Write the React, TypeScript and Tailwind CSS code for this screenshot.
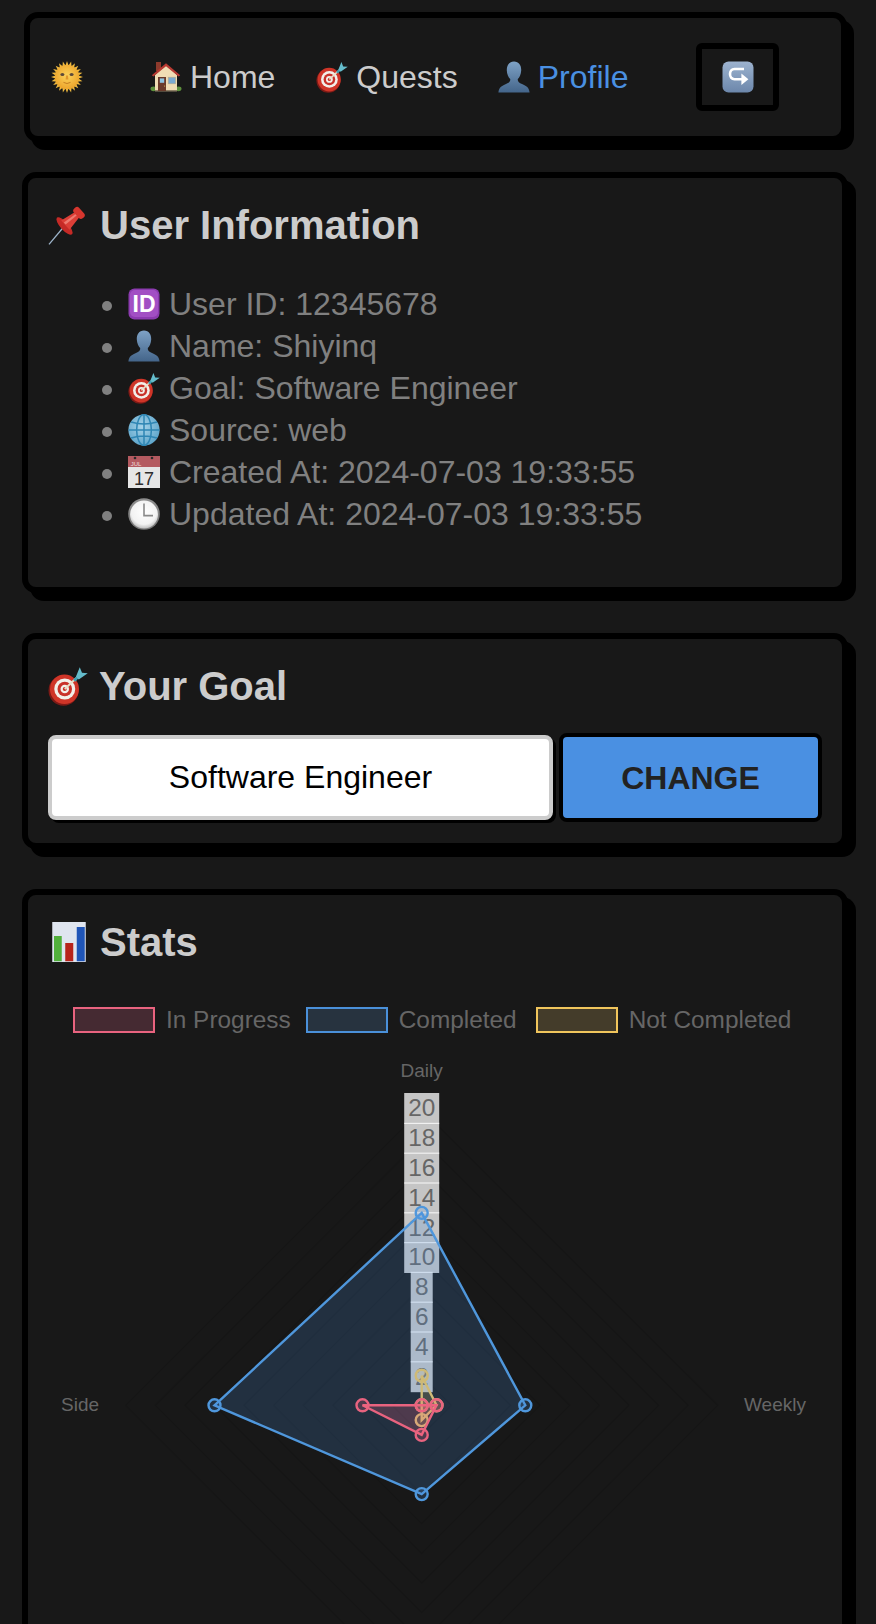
import type { ReactNode } from 'react';

type IconProps = { className?: string };

function Emoji({ className, children }: IconProps & { children: ReactNode }) {
  return (
    <svg viewBox="0 0 32 32" className={className}>
      {children}
    </svg>
  );
}

function SunIcon({ className }: IconProps) {
  const rays = Array.from({ length: 24 }, (_, i) => i * 15);
  return (
    <Emoji className={className}>
      <defs>
        <radialGradient id="sunFace" cx="50%" cy="45%" r="55%">
          <stop offset="0%" stopColor="#fbd25a" />
          <stop offset="100%" stopColor="#eda52c" />
        </radialGradient>
      </defs>
      {rays.map((deg) => (
        <polygon key={deg} points="14.5,4.5 16,0 17.5,4.5" fill="#f0ba3e" transform={`rotate(${deg} 16 16)`} />
      ))}
      <circle cx="16" cy="16" r="12.2" fill="url(#sunFace)" />
      <ellipse cx="11.4" cy="13.4" rx="2" ry="1.5" fill="#5d4a3a" />
      <ellipse cx="20.6" cy="13.4" rx="2" ry="1.5" fill="#5d4a3a" />
      <path d="M15 14.5 L14.6 18.4 L17.4 18.4 L17 14.5Z" fill="#e0982c" />
      <path d="M12.5 21.4 Q16 23.6 19.5 21.4" stroke="#c47f22" strokeWidth="1" fill="none" />
    </Emoji>
  );
}

function HouseIcon({ className }: IconProps) {
  return (
    <Emoji className={className}>
      <ellipse cx="3.5" cy="27.8" rx="3" ry="2.4" fill="#5d8f3c" />
      <ellipse cx="28.5" cy="27.8" rx="3" ry="2.4" fill="#5d8f3c" />
      <rect x="6" y="1" width="5" height="9" fill="#8e3a2c" />
      <path d="M16 4 L27 14 V30 H5 V14Z" fill="#f0dcb4" />
      <rect x="5" y="29" width="22" height="1.5" fill="#8f8066" />
      <path d="M1.8 14.2 L16 2.2 L30.2 14.2 L28.6 15.6 L16 5.2 L3.4 15.6Z" fill="#b83a32" />
      <rect x="8" y="16" width="8" height="14" fill="#6b3a2a" />
      <rect x="9.8" y="17.4" width="4.4" height="4.4" fill="#8fc3e0" />
      <circle cx="14.6" cy="25" r="0.6" fill="#e5c15a" />
      <rect x="18.2" y="16.2" width="7.4" height="6.6" fill="#7aa9d0" stroke="#b7a988" strokeWidth="0.6" />
    </Emoji>
  );
}

function DartIcon({ className }: IconProps) {
  return (
    <Emoji className={className}>
      <ellipse cx="12.4" cy="19.6" rx="12" ry="12.2" fill="#7d1a16" />
      <ellipse cx="13.2" cy="18.6" rx="11.6" ry="11.8" fill="#cf3528" />
      <circle cx="13.4" cy="18.4" r="8.4" fill="#f2efe9" />
      <circle cx="13.4" cy="18.4" r="5.8" fill="#c9322a" />
      <circle cx="13.4" cy="18.4" r="3.4" fill="#f2efe9" />
      <circle cx="13.4" cy="18.4" r="1.6" fill="#c9322a" />
      <path d="M13.4 18.4 L24 8.4" stroke="#e8e0c8" strokeWidth="1.5" />
      <path d="M20 11 L24.6 6.6 L25.8 8 L22 12.6Z" fill="#3f9fb3" />
      <path d="M22.4 8.4 L25.4 1 L27.2 5.4 L31.8 5.8 L24.6 10.8Z" fill="#64bccb" />
    </Emoji>
  );
}

function BustIcon({ className }: IconProps) {
  return (
    <Emoji className={className}>
      <defs>
        <linearGradient id="bustFill" x1="0" y1="0" x2="0" y2="1">
          <stop offset="0%" stopColor="#7ea2c6" />
          <stop offset="100%" stopColor="#44658a" />
        </linearGradient>
      </defs>
      <path
        d="M16 0.5 C21 0.5 23.4 4.6 23.2 9.4 C23 13.4 21.4 16.4 19.8 18 C19.4 20.4 21 21.8 24 23 C28.4 24.8 31 26.6 31.6 31.4 H0.4 C1 26.6 3.6 24.8 8 23 C11 21.8 12.6 20.4 12.2 18 C10.6 16.4 9 13.4 8.8 9.4 C8.6 4.6 11 0.5 16 0.5Z"
        fill="url(#bustFill)"
      />
    </Emoji>
  );
}

function ReturnIcon({ className }: IconProps) {
  return (
    <Emoji className={className}>
      <defs>
        <linearGradient id="keyFill" x1="0" y1="0" x2="0" y2="1">
          <stop offset="0%" stopColor="#9db3cf" />
          <stop offset="100%" stopColor="#6c87ab" />
        </linearGradient>
      </defs>
      <rect x="0.5" y="0.5" width="31" height="31" rx="6" fill="url(#keyFill)" />
      <path d="M22 8 H12.5 C6.5 8 6.5 18.2 12.5 18.2 H20" stroke="#fff" strokeWidth="2.6" fill="none" />
      <path d="M19.4 12.6 L26.4 18.2 L19.4 24Z" fill="#fff" />
    </Emoji>
  );
}

function PinIcon({ className }: IconProps) {
  return (
    <Emoji className={className}>
      <path d="M0.8 31.5 L13 17" stroke="#9fb6cc" strokeWidth="1" />
      <g transform="translate(13.5 16.5) rotate(48)">
        <ellipse cx="0" cy="0.4" rx="9" ry="3.2" fill="#c52a26" />
        <path d="M-5 -0.5 L-2.8 -13 H2.8 L5 -0.5Z" fill="#dc3f37" />
        <path d="M-2.4 -1 L-1.2 -13 H0.4 L-0.2 -1Z" fill="#ee7a70" />
        <rect x="-5.2" y="-18" width="10.4" height="5.6" rx="2.4" fill="#d6362e" />
      </g>
    </Emoji>
  );
}

function IdIcon({ className }: IconProps) {
  return (
    <Emoji className={className}>
      <rect x="0.5" y="0.5" width="31" height="31" rx="6" fill="#8c3bb0" />
      <rect x="2" y="2" width="28" height="27" rx="5" fill="#a24fc4" />
      <text x="16" y="24" textAnchor="middle" fontFamily="Liberation Sans, sans-serif" fontWeight="700" fontSize="23" fill="#fff">
        ID
      </text>
    </Emoji>
  );
}

function GlobeIcon({ className }: IconProps) {
  return (
    <Emoji className={className}>
      <defs>
        <radialGradient id="globeFill" cx="45%" cy="40%" r="60%">
          <stop offset="0%" stopColor="#a8d4ea" />
          <stop offset="100%" stopColor="#5fa6cb" />
        </radialGradient>
      </defs>
      <circle cx="16" cy="16" r="15.6" fill="url(#globeFill)" />
      <g stroke="#2f86b4" strokeWidth="1.5" fill="none">
        <ellipse cx="16" cy="16" rx="7.4" ry="15.4" />
        <path d="M16 0.6 V31.4 M0.6 16 H31.4 M3 8 Q16 12 29 8 M3 24 Q16 20 29 24" />
      </g>
    </Emoji>
  );
}

function CalendarIcon({ className }: IconProps) {
  return (
    <Emoji className={className}>
      <rect x="0" y="0" width="32" height="32" fill="#e6e6e6" />
      <rect x="0" y="0" width="32" height="11" fill="#b45a60" />
      <circle cx="7" cy="2" r="1.3" fill="#2a2a2a" />
      <circle cx="24" cy="2" r="1.3" fill="#2a2a2a" />
      <text x="8" y="9.5" textAnchor="middle" fontFamily="Liberation Sans, sans-serif" fontSize="6" fill="#f1dada">
        JUL
      </text>
      <text x="16" y="29" textAnchor="middle" fontFamily="Liberation Sans, sans-serif" fontSize="18" fill="#2c2c2c">
        17
      </text>
    </Emoji>
  );
}

function ClockIcon({ className }: IconProps) {
  return (
    <Emoji className={className}>
      <defs>
        <linearGradient id="clockRing" x1="0" y1="0" x2="0" y2="1">
          <stop offset="0%" stopColor="#8f8f8f" />
          <stop offset="100%" stopColor="#777777" />
        </linearGradient>
        <radialGradient id="clockFace" cx="50%" cy="40%" r="60%">
          <stop offset="0%" stopColor="#ffffff" />
          <stop offset="75%" stopColor="#f2f2f2" />
          <stop offset="100%" stopColor="#bdbdbd" />
        </radialGradient>
      </defs>
      <circle cx="16" cy="16" r="15.8" fill="url(#clockRing)" />
      <circle cx="16" cy="16.6" r="14" fill="url(#clockFace)" />
      <path d="M16 5.5 V17.6 H25" stroke="#8a8a8a" strokeWidth="1.6" fill="none" />
    </Emoji>
  );
}

function BarsIcon({ className }: IconProps) {
  return (
    <Emoji className={className}>
      <rect x="3.4" y="0" width="26.8" height="32" fill="#dfe5ef" />
      <rect x="4.8" y="11.2" width="6.2" height="20.2" fill="#52b03c" />
      <rect x="13.8" y="16.8" width="6.4" height="14.6" fill="#b8241b" />
      <rect x="23" y="4" width="6.4" height="27.4" fill="#1f55b8" />
    </Emoji>
  );
}

const NAV_LINKS = [
  { label: 'Home', Icon: HouseIcon, color: 'text-[#cccccc]', margin: 'ml-[67px]' },
  { label: 'Quests', Icon: DartIcon, color: 'text-[#cccccc]', margin: 'ml-[41px]' },
  { label: 'Profile', Icon: BustIcon, color: 'text-[#4a90e2]', margin: 'ml-[40px]' },
];

const USER_INFO = [
  { Icon: IdIcon, text: 'User ID: 12345678' },
  { Icon: BustIcon, text: 'Name: Shiyinq' },
  { Icon: DartIcon, text: 'Goal: Software Engineer' },
  { Icon: GlobeIcon, text: 'Source: web' },
  { Icon: CalendarIcon, text: 'Created At: 2024-07-03 19:33:55' },
  { Icon: ClockIcon, text: 'Updated At: 2024-07-03 19:33:55' },
];

const LEGEND = [
  { label: 'In Progress', box: 'border-[#e9637f] bg-[#452a32]', margin: 'ml-[25px]' },
  { label: 'Completed', box: 'border-[#4a90d9] bg-[#27333f]', margin: 'ml-[15px]' },
  { label: 'Not Completed', box: 'border-[#f0c55c] bg-[#443c2a]', margin: 'ml-[19px]' },
];

// chart centre and pixels per unit, read off the reference
const CX = 421.7;
const CY = 1405.3;
const UNIT = 14.8;

type Series = { stroke: string; fill: string; values: [number, number, number, number] };

// drawn back to front: the first dataset of the chart ends up on top
const SERIES: Series[] = [
  { stroke: '#f0c55c', fill: 'rgba(255,206,86,0.2)', values: [2, 1, 1, 0] },
  { stroke: '#4f97dc', fill: 'rgba(74,144,226,0.2)', values: [13, 7, 6, 14] },
  { stroke: '#e9637f', fill: 'rgba(255,99,132,0.2)', values: [0, 1, 2, 4] },
];

function seriesPoints(values: Series['values']) {
  const [top, right, bottom, left] = values;
  return [
    [CX, CY - top * UNIT],
    [CX + right * UNIT, CY],
    [CX, CY + bottom * UNIT],
    [CX - left * UNIT, CY],
  ];
}

function RadarChart() {
  const ticks = [20, 18, 16, 14, 12, 10, 8, 6, 4, 2];
  return (
    <svg viewBox="48 1050 774 680" className="mt-[17px] w-[774px] h-[680px] block" fontFamily="Liberation Sans, sans-serif">
      {ticks.map((tick) => {
        const r = tick * UNIT;
        return (
          <polygon
            key={tick}
            points={`${CX},${CY - r} ${CX + r},${CY} ${CX},${CY + r} ${CX - r},${CY}`}
            fill="none"
            stroke="rgba(0,0,0,0.1)"
            strokeWidth="1.2"
          />
        );
      })}
      <text x={CX} y="1077" textAnchor="middle" fontSize="19" fill="#666666">Daily</text>
      <text x="80" y="1411" textAnchor="middle" fontSize="19" fill="#666666">Side</text>
      <text x="775" y="1411" textAnchor="middle" fontSize="19" fill="#666666">Weekly</text>
      {ticks.map((tick) => {
        const y = 1406.5 - tick * 14.9;
        const w = tick >= 10 ? 35 : 22;
        return (
          <g key={tick}>
            <rect x={CX - w / 2} y={y - 15.5} width={w} height="31" fill="rgba(255,255,255,0.75)" />
            <text x={CX} y={y + 7.8} textAnchor="middle" fontSize="24.4" fill="#666666">
              {tick}
            </text>
          </g>
        );
      })}
      {SERIES.map((s) => {
        const pts = seriesPoints(s.values);
        return (
          <g key={s.stroke}>
            <polygon points={pts.map((p) => p.join(',')).join(' ')} fill={s.fill} stroke={s.stroke} strokeWidth="2.4" />
            {pts.map((p, i) => (
              <circle key={i} cx={p[0]} cy={p[1]} r="6" fill={s.fill} stroke={s.stroke} strokeWidth="2.4" />
            ))}
          </g>
        );
      })}
    </svg>
  );
}

const cardClass =
  'bg-[#181818] border-[6px] border-black rounded-[14px] shadow-[8px_8px_0_#000000] px-[20px]';
const titleClass = 'flex items-center text-[40px] leading-[46px] font-bold text-[#cccccc]';

export default function App() {
  return (
    <div className="h-[1624px] overflow-hidden bg-[#181818] pl-[22px] pr-[28px] pt-[12px] font-['Liberation_Sans',Arial,sans-serif]">
      {/* Nav */}
      <nav className="mx-[2px] mr-[1px] h-[130px] flex items-center bg-[#181818] border-[6px] border-black rounded-[14px] shadow-[7px_8px_0_#000000] pl-[21px]">
        <SunIcon className="w-8 h-8 shrink-0" />
        {NAV_LINKS.map(({ label, Icon, color, margin }) => (
          <a key={label} href="#" className={`flex items-center text-[32px] leading-[36px] ${color} ${margin}`}>
            <Icon className="w-8 h-8 mr-[8px] shrink-0" />
            {label}
          </a>
        ))}
        <button className="ml-[68px] w-[83px] h-[68px] border-[6px] border-black rounded-[6px] flex items-center justify-center">
          <ReturnIcon className="w-8 h-8" />
        </button>
      </nav>

      {/* User information */}
      <section className={`${cardClass} mt-[30px] pt-[24px] pb-[52px]`}>
        <h2 className={titleClass}>
          <PinIcon className="w-10 h-10 mr-[12px] shrink-0" />
          User Information
        </h2>
        <ul className="mt-[35px] pl-[80px] list-disc text-[32px] leading-[42px] text-[#808080] marker:text-[#808080]">
          {USER_INFO.map(({ Icon, text }) => (
            <li key={text}>
              <Icon className="inline-block w-8 h-8 mr-[9px] align-[-5px]" />
              {text}
            </li>
          ))}
        </ul>
      </section>

      {/* Goal */}
      <section className={`${cardClass} mt-[40px] pt-[24px] h-[216px]`}>
        <h2 className={titleClass}>
          <DartIcon className="w-10 h-10 mr-[11px] shrink-0" />
          Your Goal
        </h2>
        <div className="mt-[24px] flex items-center gap-[6px]">
          <input
            readOnly
            value="Software Engineer"
            className="w-[505px] h-[85px] bg-white border-4 border-[#cccccc] rounded-lg shadow-[3px_3px_0_#000000] text-center text-[32px] text-black"
          />
          <button className="w-[263px] h-[89px] bg-[#4a90e2] border-4 border-black rounded-lg text-[32px] font-bold text-[#222222]">
            CHANGE
          </button>
        </div>
      </section>

      {/* Stats */}
      <section className={`${cardClass} mt-[40px] pt-[24px]`}>
        <h2 className={titleClass}>
          <BarsIcon className="w-10 h-10 mr-[12px] shrink-0" />
          Stats
        </h2>
        <div className="mt-[42px] flex items-center">
          {LEGEND.map(({ label, box, margin }) => (
            <div key={label} className={`flex items-center ${margin}`}>
              <span className={`w-[82px] h-[26px] border-2 ${box}`} />
              <span className="ml-[11px] text-[24.4px] leading-[26px] text-[#666666]">{label}</span>
            </div>
          ))}
        </div>
        <RadarChart />
      </section>
    </div>
  );
}
